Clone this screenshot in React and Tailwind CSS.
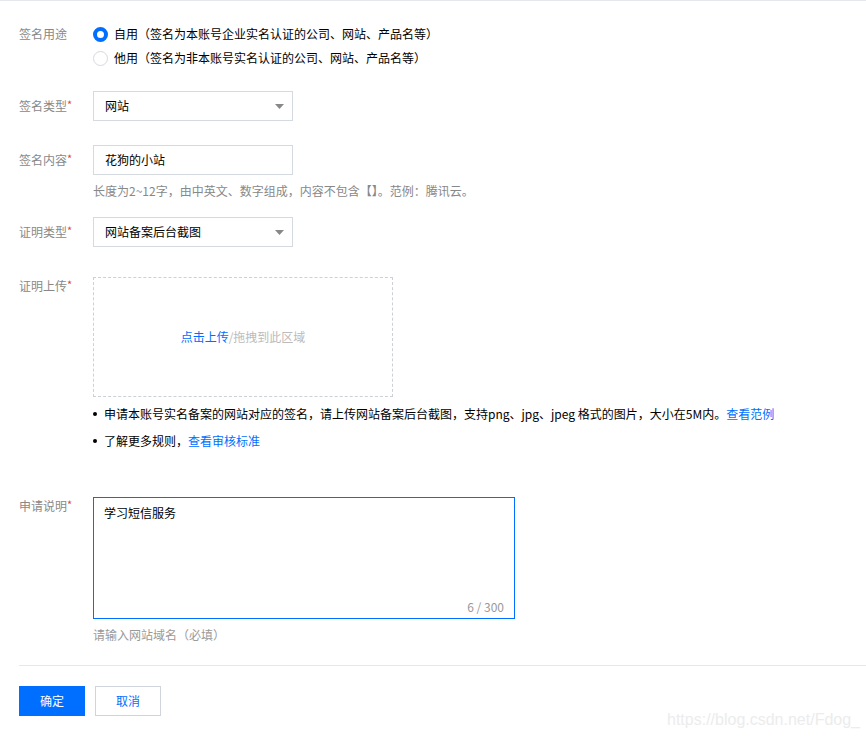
import React from "react";

const font = { fontFamily: '"Noto Sans CJK SC", "Noto Sans", sans-serif' };

function Label({ children, className = "" }) {
  return (
    <div className={`w-[74px] shrink-0 text-[12px] text-[#888] ${className}`}>
      {children}
      <span className="text-[#e54545] text-[11px] relative top-[-2px]">*</span>
    </div>
  );
}

function Arrow() {
  return (
    <svg width="9" height="5" viewBox="0 0 9 5" className="shrink-0">
      <path d="M0 0 H9 L4.5 5 Z" fill="#888" />
    </svg>
  );
}

function Select({ value }) {
  return (
    <div className="w-[200px] h-[30px] border border-[#d5d9e0] flex items-center justify-between pl-[11px] pr-[8px] text-[12px] text-[#000]">
      <span>{value}</span>
      <Arrow />
    </div>
  );
}

export default function App() {
  return (
    <div style={font} className="relative min-h-[736px] bg-white border-t border-[#e6e7ec] text-[12px]">
      <div className="pl-[19px] flex flex-col">
        {/* Row 1 */}
        <div className="flex mt-[21px]">
          <div className="w-[74px] shrink-0 text-[#888] leading-[24px]">签名用途</div>
          <div className="flex flex-col">
            <div className="flex items-center h-[24px] gap-[6px]">
              <span className="w-[15px] h-[15px] rounded-full border-[4px] border-[#006eff] bg-white box-border"></span>
              <span className="text-[#000]">自用（签名为本账号企业实名认证的公司、网站、产品名等）</span>
            </div>
            <div className="flex items-center h-[24px] gap-[6px]">
              <span className="w-[15px] h-[15px] rounded-full border border-[#d5d9e0] bg-white box-border"></span>
              <span className="text-[#000]">他用（签名为非本账号实名认证的公司、网站、产品名等）</span>
            </div>
          </div>
        </div>

        {/* Row 2 */}
        <div className="flex items-center mt-[21px]">
          <Label>签名类型</Label>
          <Select value="网站" />
        </div>

        {/* Row 3 */}
        <div className="flex items-center mt-[24px]">
          <Label>签名内容</Label>
          <div className="w-[200px] h-[30px] border border-[#d5d9e0] flex items-center pl-[11px] text-[#000]">花狗的小站</div>
        </div>
        <div className="ml-[74px] mt-[7px] leading-[18px] text-[#888]">
          长度为2~12字，由中英文、数字组成，内容不包含【】。范例：腾讯云。
        </div>

        {/* Row 4 */}
        <div className="flex items-center mt-[17px]">
          <Label>证明类型</Label>
          <Select value="网站备案后台截图" />
        </div>

        {/* Row 5 upload */}
        <div className="flex mt-[30px]">
          <Label className="leading-[18px]">证明上传</Label>
          <div className="w-[300px] h-[120px] border border-dashed border-[#ccd0d8] flex items-center justify-center">
            <span className="text-[#006eff]">点击上传</span>
            <span className="text-[#bbb]">/拖拽到此区域</span>
          </div>
        </div>
        <div className="ml-[74px] mt-[7px] flex flex-col gap-[7px] text-[#000]">
          <div className="flex items-center h-[20px]">
            <span className="w-[4px] h-[4px] rounded-full bg-[#000] mr-[7px]"></span>
            <span>
              申请本账号实名备案的网站对应的签名，请上传网站备案后台截图，支持png、jpg、jpeg 格式的图片，大小在5M内。
              <span className="text-[#006eff]">查看范例</span>
            </span>
          </div>
          <div className="flex items-center h-[20px]">
            <span className="w-[4px] h-[4px] rounded-full bg-[#000] mr-[7px]"></span>
            <span>
              了解更多规则，<span className="text-[#006eff]">查看审核标准</span>
            </span>
          </div>
        </div>

        {/* Row 6 textarea */}
        <div className="flex mt-[46px]">
          <Label className="leading-[18px]">申请说明</Label>
          <div className="relative w-[422px] h-[122px] border border-[#006eff] pl-[10px] pt-[6px] text-[#000] leading-[18px]">
            学习短信服务
            <span className="absolute right-[10px] bottom-[2px] text-[#999] leading-[18px]">6 / 300</span>
          </div>
        </div>
        <div className="ml-[74px] mt-[7px] leading-[18px] text-[#999]">请输入网站域名（必填）</div>

        {/* Divider */}
        <div className="mt-[21px] h-px bg-[#e6e7ec]"></div>

        {/* Buttons */}
        <div className="flex gap-[10px] mt-[20px]">
          <button className="w-[66px] h-[30px] bg-[#006eff] text-white text-[12px]">确定</button>
          <button className="w-[66px] h-[30px] border border-[#d0d5dd] bg-white text-[#006eff] text-[12px]">取消</button>
        </div>
      </div>

      <div
        className="absolute left-[667px] top-[707px] text-[16px] text-[#ececec]"
        style={{ fontFamily: '"Liberation Sans", sans-serif' }}
      >
        https://blog.csdn.net/Fdog_
      </div>
    </div>
  );
}
